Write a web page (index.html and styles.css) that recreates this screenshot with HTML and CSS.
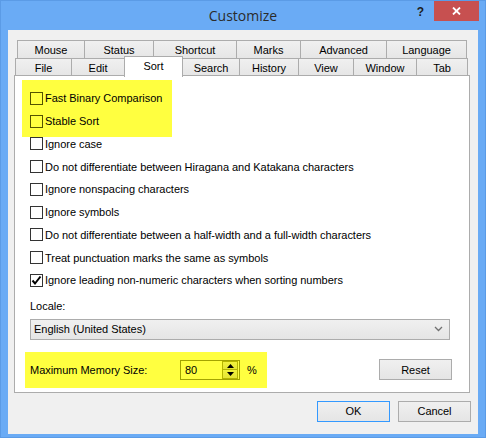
FILE: index.html
```html
<!DOCTYPE html>
<html>
<head>
<meta charset="utf-8">
<link rel="stylesheet" href="styles.css">
</head>
<body>
<div class="window">
  <div class="titlebar">
    <div></div>
    <div class="title">Customize</div>
    <div class="caption-btns">
      <span class="help">?</span>
      <span class="close"><svg width="9" height="8" viewBox="0 0 9 8"><path d="M1 0.5 L8 7.5 M8 0.5 L1 7.5" stroke="#fff" stroke-width="1.8" fill="none"/></svg></span>
    </div>
  </div>
  <div class="client">
    <div class="tabs">
      <div class="tabrow upper">
        <div class="tab">Mouse</div>
        <div class="tab">Status</div>
        <div class="tab">Shortcut</div>
        <div class="tab">Marks</div>
        <div class="tab">Advanced</div>
        <div class="tab last">Language</div>
      </div>
      <div class="tabrow lower">
        <div class="tab">File</div>
        <div class="tab">Edit</div>
        <div class="tab selected">Sort</div>
        <div class="tab">Search</div>
        <div class="tab">History</div>
        <div class="tab">View</div>
        <div class="tab">Window</div>
        <div class="tab last">Tab</div>
      </div>
    </div>
    <div class="panel">
      <div class="hl hl-top">
        <div class="row"><span class="cb hlcb"></span><span>Fast Binary Comparison</span></div>
        <div class="row"><span class="cb hlcb"></span><span>Stable Sort</span></div>
      </div>
      <div class="row"><span class="cb"></span><span>Ignore case</span></div>
      <div class="row"><span class="cb"></span><span>Do not differentiate between Hiragana and Katakana characters</span></div>
      <div class="row"><span class="cb"></span><span>Ignore nonspacing characters</span></div>
      <div class="row"><span class="cb"></span><span>Ignore symbols</span></div>
      <div class="row"><span class="cb"></span><span>Do not differentiate between a half-width and a full-width characters</span></div>
      <div class="row"><span class="cb"></span><span>Treat punctuation marks the same as symbols</span></div>
      <div class="row"><span class="cb checked"><svg width="11" height="11" viewBox="0 0 11 11"><path d="M1.5 5.5 L4 8.5 L9.5 1.5" stroke="#000" stroke-width="2" fill="none"/></svg></span><span>Ignore leading non-numeric characters when sorting numbers</span></div>
      <div class="locale-label">Locale:</div>
      <div class="select">
        <span>English (United States)</span>
        <svg width="9" height="6" viewBox="0 0 9 6"><path d="M1 1 L4.5 4.5 L8 1" stroke="#707070" stroke-width="1.3" fill="none"/></svg>
      </div>
      <div class="mem-row">
        <div class="hl hl-mem">
          <span class="mem-label">Maximum Memory Size:</span>
          <div class="spin">
            <span class="spin-val">80</span>
            <div class="spin-btns">
              <div class="spin-btn"><svg width="7" height="4" viewBox="0 0 7 4"><path d="M0 4 L3.5 0 L7 4 Z" fill="#000"/></svg></div>
              <div class="spin-btn"><svg width="7" height="4" viewBox="0 0 7 4"><path d="M0 0 L3.5 4 L7 0 Z" fill="#000"/></svg></div>
            </div>
          </div>
          <span class="pct">%</span>
        </div>
        <div class="btn reset">Reset</div>
      </div>
    </div>
    <div class="dlg-btns">
      <div class="btn ok">OK</div>
      <div class="btn">Cancel</div>
    </div>
  </div>
</div>
</body>
</html>
```
FILE: styles.css
```css
* { box-sizing: border-box; }
html, body { margin: 0; padding: 0; }
body {
  font-family: "Liberation Sans", Arial, sans-serif;
  font-size: 11px;
  letter-spacing: -0.03px;
  color: #000;
}
.window {
  width: 486px;
  height: 438px;
  background: #6aabf5;
  border: 1px solid #5b9be6;
  display: flex;
  flex-direction: column;
}
.titlebar {
  height: 29px;
  display: grid;
  grid-template-columns: 1fr auto 1fr;
  align-items: start;
}
.title {
  font-family: "Open Sans", "Noto Sans", sans-serif;
  font-size: 14px;
  letter-spacing: 0;
  line-height: 30px;
  color: #2b2b2b;
}
.caption-btns {
  justify-self: end;
  display: flex;
  align-items: flex-start;
}
.help {
  font-family: "Liberation Sans", sans-serif;
  font-weight: bold;
  font-size: 12px;
  line-height: 12px;
  margin-top: 5px;
  margin-right: 10px;
  color: #1e1e1e;
}
.close {
  width: 45px;
  height: 20px;
  background: #c75050;
  margin-right: 6px;
  display: flex;
  align-items: center;
  justify-content: center;
}
.client {
  flex: 1;
  margin: 0 7px 3px 7px;
  background: #f0f0f0;
  padding: 10px 8px 0 6px;
}
.tabrow {
  display: flex;
}
.tab {
  border-top: 1px solid #acacac;
  border-left: 1px solid #acacac;
  background: linear-gradient(#f0f0f0, #e6e6e6);
  display: flex;
  align-items: center;
  justify-content: center;
  white-space: nowrap;
}
.tab.last { border-right: 1px solid #acacac; }
.upper { margin-left: 3px; height: 18px; }
.upper .tab { height: 18px; }
.lower { margin-left: 1px; height: 17px; align-items: flex-start; }
.lower .tab { height: 17px; padding-top: 1px; }
.upper .tab:nth-child(1) { width: 67px; }
.upper .tab:nth-child(2) { width: 69px; }
.upper .tab:nth-child(3) { width: 83px; }
.upper .tab:nth-child(4) { width: 64px; }
.upper .tab:nth-child(5) { width: 86px; }
.upper .tab:nth-child(6) { width: 81px; }
.lower .tab:nth-child(1) { width: 56px; }
.lower .tab:nth-child(2) { width: 53px; }
.lower .tab:nth-child(3) { width: 59px; }
.lower .tab:nth-child(4) { width: 56px; }
.lower .tab:nth-child(5) { width: 59px; }
.lower .tab:nth-child(6) { width: 55px; }
.lower .tab:nth-child(7) { width: 63px; }
.lower .tab:nth-child(8) { width: 52px; }
.lower .tab.selected {
  position: relative;
  z-index: 1;
  background: #fff;
  border-right: 1px solid #acacac;
  height: 21px;
  margin-top: -2px;
  margin-bottom: -2px;
  padding-top: 0;
  padding-bottom: 3px;
}
.lower .tab.selected + .tab { border-left: none; }
.panel {
  background: #fff;
  border: 1px solid #acacac;
  width: 456px;
  padding: 4px 17px 4px 15px;
}
.hl { background: #ffff40; }
.hl-top {
  width: 150px;
  margin: 0 0 -4px -8px;
  padding: 7px 0 4px 8px;
}
.row {
  height: 22.75px;
  display: flex;
  align-items: center;
  gap: 2px;
  white-space: nowrap;
}
.cb {
  width: 13px;
  height: 13px;
  border: 1px solid #333;
  background: #fff;
  flex: none;
  display: flex;
  align-items: center;
  justify-content: center;
}
.cb.hlcb { background: #ffff40; border-color: #535300; }
.locale-label {
  margin-top: 7px;
  line-height: 15px;
}
.select {
  margin-top: 5px;
  width: 420px;
  height: 21px;
  border: 1px solid #acacac;
  background: linear-gradient(#f0f0f0, #e5e5e5);
  display: flex;
  align-items: center;
  justify-content: space-between;
  padding: 0 6px 0 3px;
}
.mem-row {
  margin-top: 12px;
  display: flex;
  align-items: center;
  justify-content: space-between;
}
.hl-mem {
  width: 242px;
  height: 36px;
  margin-left: -5px;
  padding-left: 5px;
  display: flex;
  align-items: center;
}
.mem-label { width: 150px; }
.spin {
  width: 60px;
  height: 20px;
  border: 1px solid #a3a300;
  display: flex;
  align-items: center;
  justify-content: space-between;
  padding: 0 1px 0 4px;
}
.spin-btns {
  display: flex;
  flex-direction: column;
  width: 16px;
  height: 18px;
}
.spin-btn {
  flex: 1;
  border: 1px solid #b5b500;
  background: linear-gradient(#f2f23c, #e5e534);
  display: flex;
  align-items: center;
  justify-content: center;
}
.spin-btn + .spin-btn { border-top: none; }
.pct { margin-left: 7px; }
.btn {
  width: 73px;
  height: 21px;
  border: 1px solid #acacac;
  background: linear-gradient(#f0f0f0, #e5e5e5);
  display: flex;
  align-items: center;
  justify-content: center;
}
.btn.ok { border-color: #3399ff; }
.dlg-btns {
  margin-top: 8px;
  margin-right: -1px;
  display: flex;
  justify-content: flex-end;
  gap: 8px;
}
```
